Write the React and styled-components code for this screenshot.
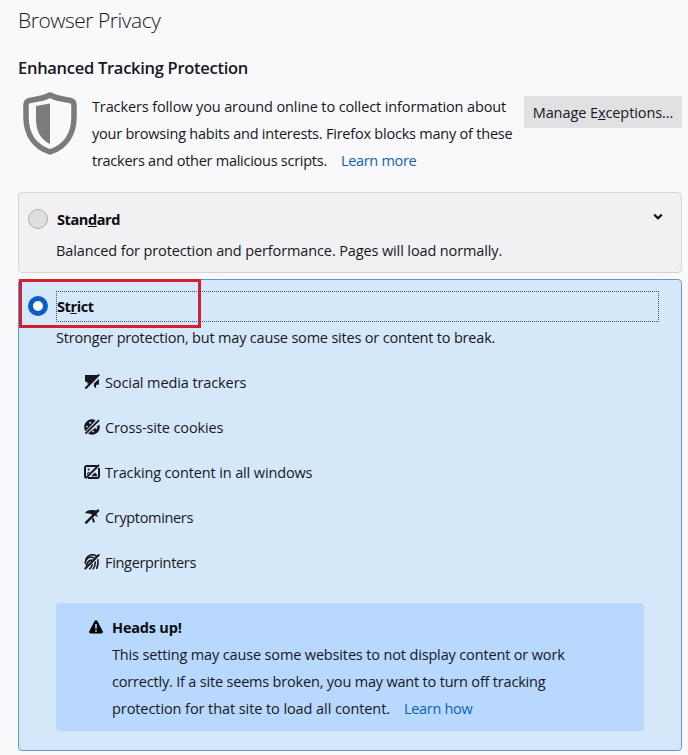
import React, { useState } from "react";
import styled, { createGlobalStyle } from "styled-components";

const GlobalStyle = createGlobalStyle`
  * {
    box-sizing: border-box;
  }

  body {
    margin: 0;
    background: #f9f9fb;
    color: #17171d;
    font-family: "Open Sans", "Noto Sans", sans-serif;
    font-size: 14.5px;
    line-height: 27px;
  }
`;

const SocialIcon = () => (
  <TrackerSvg viewBox="0 0 16 16">
    <path d="M1 1h13L8.6 6.8 3.6 10.6V8.4L1 7.6z" />
    <path d="M14.9 4.8v6h-2.8v3.6L9.9 12.2V9.6z" />
    <path d="M15.2.6 1.4 14.4" stroke="currentColor" strokeWidth="2.1" />
  </TrackerSvg>
);

const CookieIcon = () => (
  <TrackerSvg viewBox="0 0 16 16">
    <path
      fillRule="evenodd"
      d="M1.5 12.2C-.8 8.8 0 4.2 3.2 1.9 5.9-.2 9.5-.1 11.6 1.5zM6.2 2.7a1 1 0 1 0 0 2 1 1 0 0 0 0-2zM3 6.7a.9.9 0 1 0 0 1.8.9.9 0 0 0 0-1.8z"
    />
    <path
      fillRule="evenodd"
      d="M15.4 5.4c1 3.3 0 6.7-2.6 8.7-2.6 2-6.3 2-8.9.5zM12.3 8.1a.9.9 0 1 0 0 1.8.9.9 0 0 0 0-1.8zM9.1 11.5a.9.9 0 1 0 0 1.8.9.9 0 0 0 0-1.8z"
    />
    <path d="M15.1 1.1 1.4 14.7" stroke="currentColor" strokeWidth="1.9" />
  </TrackerSvg>
);

const ContentIcon = () => (
  <TrackerSvg viewBox="0 0 16 16">
    <path
      fill="none"
      stroke="currentColor"
      strokeWidth="2"
      d="M13 2H3a2 2 0 0 0-2 2v8c0 .7.3 1.3.8 1.6M4 14h9a2 2 0 0 0 2-2V4"
    />
    <path d="M15 1 1.6 14.3" stroke="currentColor" strokeWidth="1.9" />
    <circle cx="4.6" cy="5.6" r="1" />
    <path d="M3 11V9.2l2-1.5 1 .4zM7.2 12.2 10.9 8.4 13 10.4v1.8z" />
  </TrackerSvg>
);

const MinerIcon = () => (
  <TrackerSvg viewBox="0 0 16 16">
    <path d="M1 4.2C2.2 1.8 5 .9 8.3 1.1L13 1.4 9 6.3 6.9 5.1C4.9 4.2 3 4 1 4.2z" />
    <path d="M10.6 6.6 12.2 5c1 .9 1.5 2 1.5 3.2-.9-.8-1.9-1.2-3.1-1.6z" />
    <path d="M7.9 10.2 9.5 8.6l1.4 4.2-1.5 1.1z" />
    <path d="M14.8.9 1.4 14.4" stroke="currentColor" strokeWidth="2.4" />
  </TrackerSvg>
);

const FingerprintIcon = () => (
  <TrackerSvg viewBox="0 0 16 16">
    <g fill="none" stroke="currentColor" strokeWidth="1.6" strokeLinecap="round">
      <path d="M2 5.2C3.8.5 9.1-.3 12.2 2" />
      <path d="M1.2 9.1c.9-5.8 5.1-7.2 8.7-5.1" />
      <path d="M2.2 11.2C4 9.4 3.2 6 7.8 6.1" />
      <path d="M5.7 14.8c1.8-1.5 2.3-3 2.6-4.2M9.2 14.8c1.6-2 2.1-4 2.1-6.8M12.7 14.3c1.4-2.6 1.6-5.2 1.2-8.6" />
      <path d="M14.8 1 1.3 14.5" strokeWidth="1.9" />
    </g>
  </TrackerSvg>
);

const trackers = [
  { label: "Social media trackers", icon: SocialIcon, tracking: -0.1 },
  { label: "Cross-site cookies", icon: CookieIcon, tracking: -0.13 },
  { label: "Tracking content in all windows", icon: ContentIcon, tracking: -0.13 },
  { label: "Cryptominers", icon: MinerIcon, tracking: -0.34 },
  { label: "Fingerprinters", icon: FingerprintIcon, tracking: -0.32 },
];

export default function App() {
  const [level, setLevel] = useState("strict");

  return (
    <>
      <GlobalStyle />
      <Page>
        <PageTitle>Browser Privacy</PageTitle>
        <SectionTitle>Enhanced Tracking Protection</SectionTitle>

        <Intro>
          <Shield viewBox="0 0 54 63">
            <path
              d="M27 3 C20 7 11 7.5 6.5 8.5 Q3 9.3 3 13 V25 C3 43 12 55 27 60 C42 55 51 43 51 25 V13 Q51 9.3 47.5 8.5 C43 7.5 34 7 27 3Z"
              fill="none"
              stroke="#7b7b7e"
              strokeWidth="5.5"
              strokeLinejoin="round"
            />
            <path d="M27 11.5 13 14V27c0 13 5 20.5 14 25z" fill="#7b7b7e" />
          </Shield>
          <Description>
            <Line $tracking={-0.12}>Trackers follow you around online to collect information about</Line>
            <Line $tracking={-0.22}>your browsing habits and interests. Firefox blocks many of these</Line>
            <Line $tracking={-0.26}>
              trackers and other malicious scripts.
              <TextLink href="#">Learn more</TextLink>
            </Line>
          </Description>
          <ExceptionsButton>
            Manage E<u>x</u>ceptions...
          </ExceptionsButton>
        </Intro>

        <Card>
          <CardHeader>
            <Radio checked={level === "standard"} onChange={() => setLevel("standard")} />
            <CardLabel>
              Stan<u>d</u>ard
            </CardLabel>
            <Chevron viewBox="0 0 10 8">
              <path d="M1.2 1.6 5 5.3l3.8-3.7" fill="none" stroke="#111118" strokeWidth="2.2" />
            </Chevron>
          </CardHeader>
          <CardText $tracking={-0.12}>
            Balanced for protection and performance. Pages will load normally.
          </CardText>
        </Card>

        <Card $selected>
          <CardHeader>
            <Radio checked={level === "strict"} onChange={() => setLevel("strict")} />
            <CardLabel $focused>
              St<u>r</u>ict
            </CardLabel>
            <Highlight />
          </CardHeader>
          <CardText $tracking={-0.19}>
            Stronger protection, but may cause some sites or content to break.
          </CardText>
          <TrackerList>
            {trackers.map(({ label, icon: Icon, tracking }) => (
              <TrackerItem key={label} $tracking={tracking}>
                <Icon />
                {label}
              </TrackerItem>
            ))}
          </TrackerList>
          <Warning>
            <WarningSvg viewBox="0 0 14 14">
              <path
                fillRule="evenodd"
                d="M5.6 1.1a1.6 1.6 0 0 1 2.8 0l5.3 10.2c.6 1.1-.1 2.3-1.3 2.3H1.6C.4 13.6-.3 12.4.3 11.3zM6.2 4v4.7h1.6V4zM6.2 10.1v1.6h1.6v-1.6z"
              />
            </WarningSvg>
            <div>
              <WarningTitle>Heads up!</WarningTitle>
              <Line $tracking={-0.15}>
                This setting may cause some websites to not display content or work
              </Line>
              <Line $tracking={-0.19}>
                correctly. If a site seems broken, you may want to turn off tracking
              </Line>
              <Line $tracking={-0.08}>
                protection for that site to load all content.
                <TextLink href="#">Learn how</TextLink>
              </Line>
            </div>
          </Warning>
        </Card>
      </Page>
    </>
  );
}

const Page = styled.main`
  padding: 5px 6px 4px 18px;
  height: 755px;
  overflow: hidden;
`;

const PageTitle = styled.h1`
  margin: 0;
  font-size: 21px;
  font-weight: 300;
  line-height: 30px;
  letter-spacing: -0.47px;
`;

const SectionTitle = styled.h2`
  margin: 20px 0 0;
  font-size: 16.5px;
  font-weight: 600;
  line-height: 26px;
  letter-spacing: -0.28px;
`;

const Intro = styled.section`
  display: flex;
  align-items: flex-start;
  height: 111px;
  padding-top: 12px;
`;

const Shield = styled.svg`
  flex: none;
  width: 54px;
  height: 63px;
  margin: -1px 15px 0 5px;
`;

const Description = styled.div`
  flex: 1;
`;

const Line = styled.div`
  white-space: nowrap;
  letter-spacing: ${(props) => props.$tracking}px;
`;

const TextLink = styled.a`
  margin-left: 14px;
  color: #0d62b5;
  letter-spacing: -0.32px;
  text-decoration: none;
`;

const ExceptionsButton = styled.button`
  flex: none;
  width: 158px;
  height: 32px;
  margin-top: 3px;
  padding: 0;
  border: 0;
  background: #e1e1e3;
  color: inherit;
  font: inherit;
  letter-spacing: -0.08px;
  white-space: nowrap;
`;

const Card = styled.section`
  height: ${(props) => (props.$selected ? "472px" : "81px")};
  margin-bottom: 6px;
  padding: 11px 22px 0 9px;
  border: 1px solid ${(props) => (props.$selected ? "#5b9fc9" : "#d5d5d8")};
  border-radius: 4px;
  background: ${(props) => (props.$selected ? "#d5e8fa" : "#f1f1f3")};
`;

const CardHeader = styled.div`
  position: relative;
  display: flex;
  align-items: center;
  height: 31px;
`;

const Radio = styled.input.attrs({ type: "radio" })`
  appearance: none;
  flex: none;
  width: 20px;
  height: 20px;
  margin: -2px 8px 0 0;
  border: ${(props) => (props.checked ? "5px solid #0a5bcc" : "1px solid #adadb0")};
  border-radius: 50%;
  background: ${(props) => (props.checked ? "#ffffff" : "#dededf")};
`;

const CardLabel = styled.label`
  flex: 1;
  height: 31px;
  padding-left: ${(props) => (props.$focused ? "0" : "1px")};
  border: ${(props) => (props.$focused ? "1px dotted #39546f" : "0")};
  color: #0b0b10;
  font-weight: 700;
  line-height: ${(props) => (props.$focused ? "29px" : "31px")};
  letter-spacing: -0.42px;
`;

const Chevron = styled.svg`
  width: 10px;
  height: 8px;
  margin: -5px -4px 0 0;
`;

const Highlight = styled.div`
  position: absolute;
  top: -12px;
  left: -9px;
  width: 182px;
  height: 49px;
  border: 3px solid #d3202f;
  pointer-events: none;
`;

const CardText = styled.div`
  margin: 2px 0 0 28px;
  white-space: nowrap;
  letter-spacing: ${(props) => props.$tracking}px;
`;

const TrackerList = styled.ul`
  display: grid;
  grid-auto-rows: 45px;
  margin: 9px 0 0 56px;
  padding: 0;
  list-style: none;
`;

const TrackerItem = styled.li`
  display: flex;
  align-items: center;
  letter-spacing: ${(props) => props.$tracking}px;
`;

const TrackerSvg = styled.svg`
  width: 16px;
  height: 16px;
  margin: -1px 5px 0 0;
  fill: currentColor;
`;

const Warning = styled.aside`
  display: flex;
  width: 588px;
  height: 128px;
  margin: 18px 0 0 28px;
  padding: 11px 0 0 33px;
  border-radius: 4px;
  background: #b8d9fd;
`;

const WarningSvg = styled.svg`
  flex: none;
  width: 14px;
  height: 14px;
  margin: 6px 9px 0 0;
`;

const WarningTitle = styled.div`
  color: #0b0b10;
  font-weight: 700;
  letter-spacing: -0.2px;
`;
